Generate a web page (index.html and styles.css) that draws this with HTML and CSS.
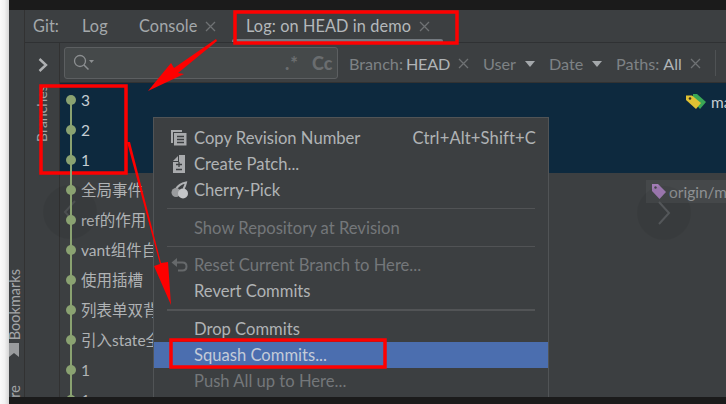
FILE: index.html
```html
<!DOCTYPE html>
<html lang="en">
<head>
<meta charset="utf-8">
<title>Git Log</title>
<link rel="stylesheet" href="styles.css">
</head>
<body>
<div class="edge"></div>
<div class="window">
  <div class="topbar"></div>
  <div class="ide">
    <aside class="stripe">
      <span class="stripe-label bookmarks">Bookmarks</span>
      <svg class="bookmark-icon" width="11" height="14" viewBox="0 0 11 14"><path d="M0 0H10V14L5 10L0 14Z" fill="#9a9c9e"/></svg>
      <span class="stripe-label structure">Structure</span>
    </aside>
    <div class="panel">
      <header class="tabs">
        <span class="git-label">Git:</span>
        <span class="tab tab-log">Log</span>
        <span class="tab tab-console">Console<svg class="close" width="11" height="11" viewBox="0 0 11 11"><path d="M1 1L10 10M10 1L1 10"/></svg></span>
        <span class="tab tab-active">Log: on HEAD in demo<svg class="close" width="11" height="11" viewBox="0 0 11 11"><path d="M1 1L10 10M10 1L1 10"/></svg></span>
      </header>
      <div class="body">
        <div class="side">
          <svg class="expand" width="10" height="14" viewBox="0 0 10 14"><path d="M1.5 1L8 7L1.5 13" fill="none" stroke="#afb1b3" stroke-width="2.4"/></svg>
          <span class="branches">Branches</span>
        </div>
        <div class="log">
          <div class="filters">
            <div class="search">
              <svg width="22" height="18" viewBox="0 0 22 18"><circle cx="7" cy="7" r="5.5" fill="none" stroke="#8c8f91" stroke-width="1.3"/><path d="M11 11L15.5 15.5" stroke="#8c8f91" stroke-width="1.5"/><path d="M16 6H21L18.500 9Z" fill="#8c8f91"/></svg>
              <span class="regex">.*</span><span class="case">Cc</span>
            </div>
            <span class="filter filter-branch">Branch: <b>HEAD</b><svg class="close" width="11" height="11" viewBox="0 0 11 11"><path d="M1 1L10 10M10 1L1 10"/></svg></span>
            <span class="filter filter-user">User<i class="caret"></i></span>
            <span class="filter filter-date">Date<i class="caret"></i></span>
            <span class="filter filter-paths">Paths: <b>All</b><svg class="close" width="11" height="11" viewBox="0 0 11 11"><path d="M1 1L10 10M10 1L1 10"/></svg></span>
            <span class="filter-sep"></span>
          </div>
          <div class="commits">
            <div class="rail"></div>
            <div class="row selected"><i class="dot"></i><span>3</span>
              <span class="ref ref-local"><svg width="22" height="18" viewBox="0 0 22 18"><path d="M8 1H12L21 9L15 16L8 8Z" fill="#3aa655"/><path d="M1 2.500H7L16 10L11 16L1 7Z" fill="#e1c233"/><circle cx="5" cy="5.500" r="1.300" fill="#3a3320"/></svg>master</span>
            </div>
            <div class="row selected"><i class="dot"></i><span>2</span></div>
            <div class="row selected"><i class="dot"></i><span>1</span></div>
            <div class="row"><i class="dot"></i><span>全局事件</span>
              <span class="ref ref-origin"><svg width="15" height="17" viewBox="0 0 15 17"><path d="M1 1H7L15 9L8.500 16L1 8Z" fill="#a27cb6"/><circle cx="4.500" cy="4.500" r="1.200" fill="#45484a"/></svg>origin/master</span>
            </div>
            <div class="row"><i class="dot"></i><span>ref的作用</span></div>
            <div class="row"><i class="dot"></i><span>vant组件自定义</span></div>
            <div class="row"><i class="dot"></i><span>使用插槽</span></div>
            <div class="row"><i class="dot"></i><span>列表单双背景</span></div>
            <div class="row"><i class="dot"></i><span>引入state全局</span></div>
            <div class="row"><i class="dot"></i><span>1</span></div>
            <div class="row"><i class="dot"></i><span>1</span></div>
          </div>
        </div>
      </div>
    </div>
  </div>
  <div class="bottombar"></div>
</div>

<div class="nav nav-left"><svg width="14" height="26" viewBox="0 0 14 26"><path d="M12 2L2 13L12 24" fill="none" stroke="#4c4f51" stroke-width="2"/></svg></div>
<div class="nav nav-right"><svg width="14" height="26" viewBox="0 0 14 26"><path d="M2 2L12 13L2 24" fill="none" stroke="#54575a" stroke-width="2"/></svg></div>

<nav class="menu">
  <div class="item"><svg class="icon" width="16" height="16" viewBox="0 0 16 16"><path d="M0 0H11V2H2V13H0Z" fill="#a9abad"/><path d="M3 3H15.500V15.500H3Z" fill="#a9abad"/><path d="M6 6.500H13M6 9.500H13M6 12.500H13" stroke="#3c3f41" stroke-width="1.300"/></svg><span>Copy Revision Number</span><kbd>Ctrl+Alt+Shift+C</kbd></div>
  <div class="item"><svg class="icon" width="16" height="18" viewBox="0 0 16 18"><path d="M2 6L7 1V6Z" fill="#a9abad"/><path d="M8 0H14V18H2V7H8Z" fill="#a9abad"/><path d="M5 9.500H11M8 7V12M5 14.500H11" stroke="#3c3f41" stroke-width="1.300" fill="none"/></svg><span>Create Patch...</span></div>
  <div class="item"><svg class="icon" width="18" height="18" viewBox="0 0 18 18"><path d="M5 8C7 4.500 10 2.500 15 1.500C14.500 4 13.500 6 12.500 8" fill="none" stroke="#b0b2b4" stroke-width="2"/><circle cx="5" cy="11.500" r="4.500" fill="#9a9c9e"/><circle cx="12" cy="12.500" r="5" fill="#c4c6c8"/></svg><span>Cherry-Pick</span></div>
  <hr>
  <div class="item item-tall disabled"><span>Show Repository at Revision</span></div>
  <hr>
  <div class="item disabled"><svg class="icon" width="17" height="15" viewBox="0 0 17 15"><path d="M5 5H11.500C14 5 15.500 6.800 15.500 9C15.500 11.500 14 13 11.500 13H7" fill="none" stroke="#66696b" stroke-width="2"/><path d="M6 0.500V9.500L0.500 5Z" fill="#66696b"/></svg><span>Reset Current Branch to Here...</span></div>
  <div class="item"><span>Revert Commits</span></div>
  <hr class="strong">
  <div class="item"><span>Drop Commits</span></div>
  <div class="item active"><span>Squash Commits...</span></div>
  <div class="item disabled"><span>Push All up to Here...</span></div>
</nav>

<svg class="marks" width="726" height="404" viewBox="0 0 726 404">
  <g fill="none" stroke="#fe0000" stroke-width="3.500">
    <rect x="235" y="12" width="222" height="31"/>
    <rect x="41" y="86" width="85" height="87"/>
    <rect x="171" y="340" width="214" height="27"/>
  </g>
  <path d="M216 39L217 41L178 73L184 74L148 91L171 63L174 68Z" fill="#fe0000"/>
  <path d="M127 142L130 142L161 263L168 262L171 305L154 266L160 264Z" fill="#fe0000"/>
</svg>
</body>
</html>
```

FILE: styles.css
```css
* { box-sizing: border-box; }

html, body {
  margin: 0;
  width: 726px;
  height: 404px;
  overflow: hidden;
}

body {
  position: relative;
  display: flex;
  background: #fff;
  font: 16px/20px Lato, "Noto Sans CJK SC", sans-serif;
  color: #a9b7c6;
}

.edge {
  width: 9px;
  flex: none;
  background: linear-gradient(90deg, #fafafa 0%, #f2f2f2 50%, #d6d6d6 100%);
}

.window {
  flex: 1;
  display: flex;
  flex-direction: column;
  min-width: 0;
}

.topbar { height: 10px; flex: none; background: #1b1b1b; }
.bottombar { height: 7px; flex: none; background: #1b1b1b; }

.ide {
  flex: 1;
  display: flex;
  min-height: 0;
  background: #3c3f41;
}

/* left tool stripe */
.stripe {
  width: 16px;
  flex: none;
  position: relative;
  border-right: 1px solid #323232;
  overflow: hidden;
}

.stripe-label {
  position: absolute;
  left: -2px;
  writing-mode: vertical-rl;
  transform: rotate(180deg);
  font-size: 14.500px;
  line-height: 15px;
  color: #a4a6a8;
  white-space: nowrap;
}

.bookmarks { top: 259px; }
.structure { top: 375px; }
.bookmark-icon { position: absolute; left: 0; top: 333px; }

.panel {
  flex: 1;
  display: flex;
  flex-direction: column;
  min-width: 0;
}

/* tabs */
.tabs {
  height: 33px;
  flex: none;
  display: flex;
  align-items: center;
  position: relative;
  border-bottom: 1px solid #2f3133;
  color: #a4a8ab;
  font-size: 16.300px;
  letter-spacing: .1px;
}

.git-label { margin-left: 8px; width: 49px; }
.tab { display: flex; align-items: center; white-space: nowrap; }
.tab-log { width: 57px; }
.tab-console { width: 93px; }
.tab-active { position: relative; padding-left: 14px; height: 100%; color: #b4b8bb; }
.tab-active::after {
  content: "";
  position: absolute;
  left: 0;
  width: 211px;
  bottom: 0;
  height: 3px;
  background: #747a80;
  border-radius: 2px 2px 0 0;
}

.close {
  fill: none;
  stroke: #6f7274;
  stroke-width: 1.300;
  margin-left: 8px;
  flex: none;
}

/* body */
.body { flex: 1; display: flex; min-height: 0; }

.side {
  width: 35px;
  flex: none;
  position: relative;
  border-right: 1px solid #323232;
  overflow: hidden;
}

.expand { position: absolute; left: 13px; top: 15px; }

.branches {
  position: absolute;
  left: 9px;
  top: 44px;
  writing-mode: vertical-rl;
  transform: rotate(180deg);
  font-size: 14px;
  line-height: 15px;
  height: 55px;
  color: #a4a6a8;
  white-space: nowrap;
}

.log { flex: 1; display: flex; flex-direction: column; min-width: 0; }

/* filters */
.filters {
  height: 40px;
  flex: none;
  display: flex;
  align-items: center;
  border-bottom: 1px solid #323232;
  color: #7e8285;
  font-size: 16.200px;
  white-space: nowrap;
}

.search {
  margin-left: 4px;
  width: 274px;
  height: 32px;
  flex: none;
  display: flex;
  align-items: center;
  padding-left: 8px;
  background: #45494a;
  border: 1px solid #5c5f61;
  border-radius: 3px;
}

.regex { margin-left: 190px; font-weight: 900; color: #6a6d6f; width: 27px; font-size: 18px; letter-spacing: 1px; }
.case { font-weight: 900; color: #6a6d6f; font-size: 18px; }

.filter { display: flex; align-items: center; padding-top: 2px; }
.filter b { font-weight: 400; color: #b0b4b7; margin-left: 4px; }
.filter-branch { margin-left: 11px; width: 134px; }
.filter-branch b { margin-left: 3px; letter-spacing: -.2px; }
.filter-user { width: 66px; }
.filter-date { width: 67px; }
.filter-paths { width: 99px; }
.filter-sep { width: 1px; height: 26px; background: #4f5254; }

.caret {
  width: 0;
  height: 0;
  margin-left: 9px;
  border-left: 5.500px solid transparent;
  border-right: 5.500px solid transparent;
  border-top: 6px solid #a4a8ab;
}

/* commits */
.commits {
  flex: 1;
  position: relative;
  overflow: hidden;
  min-width: 0;
}

.rail {
  position: absolute;
  left: 10px;
  top: 17px;
  bottom: 0;
  width: 2px;
  background: #8aa271;
  z-index: 1;
}

.row {
  position: relative;
  height: 30px;
  display: flex;
  align-items: center;
  padding: 4px 0 0 21px;
  white-space: nowrap;
  color: #b0b3b5;
  font-size: 15.500px;
}

.row.selected { background: #0d293e; color: #c5cdd3; }

.dot {
  position: absolute;
  left: 6px;
  top: 12px;
  width: 10px;
  height: 10px;
  border-radius: 50%;
  background: #8aa271;
  z-index: 1;
}

.ref {
  position: absolute;
  display: flex;
  align-items: center;
  top: 4px;
  height: 30px;
}

.ref svg { flex: none; }
.ref-local { left: 625px; color: #c5cdd3; }
.ref-local svg { margin-right: 4px; }
.ref-origin {
  left: 586px;
  top: 7px;
  height: 23px;
  padding-left: 5px;
  background: #45484a;
  color: #8e9193;
}
.ref-origin svg { margin-right: 3px; }

/* floating carousel arrows */
.nav {
  position: absolute;
  width: 54px;
  height: 54px;
  border-radius: 50%;
  display: flex;
  align-items: center;
  justify-content: center;
  background: rgba(0, 0, 0, .05);
}
.nav-left { left: 43px; top: 185px; }
.nav-right { left: 637px; top: 186px; }

/* context menu */
.menu {
  position: absolute;
  left: 153px;
  top: 117px;
  width: 396px;
  height: 280px;
  padding-top: 7px;
  background: #3c3f41;
  border: 1px solid #515456;
  border-bottom: 0;
  color: #b0b3b5;
  font-size: 16.600px;
  overflow: hidden;
}

.item {
  height: 26px;
  display: flex;
  align-items: center;
  padding-left: 40px;
  position: relative;
  white-space: nowrap;
}

.item-tall { height: 27px; }
.item .icon { position: absolute; left: 17px; top: 50%; transform: translateY(-50%); }
.item kbd { margin-left: auto; padding-right: 12px; font: inherit; letter-spacing: .12px; }
.item.disabled { color: #74777a; }
.item.active { background: #4b6eaf; color: #c4cbd8; }

.menu hr {
  height: 1px;
  margin: 5px 13px;
  border: 0;
  background: #515355;
}

.menu hr.strong { height: 2px; background: #525456; }

/* annotations */
.marks {
  position: absolute;
  left: 0;
  top: 0;
  pointer-events: none;
}
```
